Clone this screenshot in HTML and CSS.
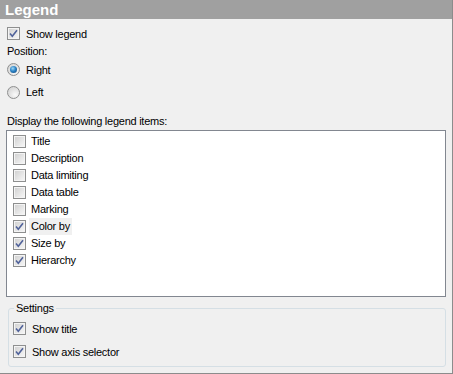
FILE: index.html
```html
<!DOCTYPE html>
<html lang="en">
<head>
  <meta charset="UTF-8">
  <title>Legend</title>
  <link rel="stylesheet" href="styles.css">
</head>
<body>
  <div class="panel">
    <div class="header">Legend</div>

    <div class="content">
      <label class="check-row">
        <span class="cb checked"><svg viewBox="0 0 13 13"><path d="M3 6.5 L5.3 9.2 L10 3.2" /></svg></span>
        <span>Show legend</span>
      </label>

      <div class="caption">Position:</div>

      <label class="radio-row first">
        <span class="rb selected"><span class="dot"></span></span>
        <span>Right</span>
      </label>
      <label class="radio-row">
        <span class="rb"></span>
        <span>Left</span>
      </label>

      <div class="caption items-caption">Display the following legend items:</div>

      <div class="list">
        <div class="list-item"><span class="cb"></span><span class="item-text">Title</span></div>
        <div class="list-item"><span class="cb"></span><span class="item-text">Description</span></div>
        <div class="list-item"><span class="cb"></span><span class="item-text">Data limiting</span></div>
        <div class="list-item"><span class="cb"></span><span class="item-text">Data table</span></div>
        <div class="list-item"><span class="cb"></span><span class="item-text">Marking</span></div>
        <div class="list-item"><span class="cb checked"><svg viewBox="0 0 13 13"><path d="M3 6.5 L5.3 9.2 L10 3.2" /></svg></span><span class="item-text focused">Color by</span></div>
        <div class="list-item"><span class="cb checked"><svg viewBox="0 0 13 13"><path d="M3 6.5 L5.3 9.2 L10 3.2" /></svg></span><span class="item-text">Size by</span></div>
        <div class="list-item"><span class="cb checked"><svg viewBox="0 0 13 13"><path d="M3 6.5 L5.3 9.2 L10 3.2" /></svg></span><span class="item-text">Hierarchy</span></div>
      </div>

      <fieldset class="group">
        <legend>Settings</legend>
        <label class="check-row group-row">
          <span class="cb checked"><svg viewBox="0 0 13 13"><path d="M3 6.5 L5.3 9.2 L10 3.2" /></svg></span>
          <span>Show title</span>
        </label>
        <label class="check-row group-row">
          <span class="cb checked"><svg viewBox="0 0 13 13"><path d="M3 6.5 L5.3 9.2 L10 3.2" /></svg></span>
          <span>Show axis selector</span>
        </label>
      </fieldset>
    </div>
  </div>
</body>
</html>
```

FILE: styles.css
```css
:root {
  --header-bg: #a0a0a0;
  --panel-bg: #f0f0f0;
  --edge: #8c8c8c;
  --list-border: #828790;
  --group-border: #d5dfe5;
  --check-color: #50629a;
}

* {
  box-sizing: border-box;
  margin: 0;
  padding: 0;
}

body {
  background-color: var(--panel-bg);
  font-family: 'Liberation Sans', Arial, sans-serif;
  font-size: 11px;
  letter-spacing: -0.25px;
  color: #000;
}

.panel {
  width: 453px;
  height: 374px;
  background-color: var(--panel-bg);
  border-right: 1px solid var(--edge);
  border-bottom: 1px solid var(--edge);
  overflow: hidden;
}

.header {
  height: 19px;
  line-height: 19px;
  padding-left: 5px;
  background-color: var(--header-bg);
  color: #fff;
  font-weight: bold;
  font-size: 15px;
  letter-spacing: 0;
}

.content {
  padding-left: 6px;
}

/* checkbox / radio rows */
.check-row,
.radio-row {
  display: flex;
  align-items: center;
  padding-left: 1px;
  gap: 6px;
}

.check-row {
  margin-top: 4px;
  height: 21px;
}

.caption {
  height: 14px;
  line-height: 14px;
  padding-left: 1px;
}

.radio-row {
  height: 22px;
}

.radio-row.first {
  height: 23px;
}

.items-caption {
  margin-top: 9px;
  height: 18px;
  line-height: 18px;
}

.cb {
  position: relative;
  flex: none;
  width: 13px;
  height: 13px;
  border: 1px solid #8e8f8f;
  background: linear-gradient(135deg, #cfcfcf 0%, #e8e8e8 60%, #f8f8f8 100%);
  box-shadow: inset 0 0 0 1px #f4f4f4;
}

.cb svg {
  position: absolute;
  left: -1px;
  top: -1px;
  width: 13px;
  height: 13px;
}

.cb svg path {
  fill: none;
  stroke: var(--check-color);
  stroke-width: 1.6;
}

.rb {
  position: relative;
  flex: none;
  width: 13px;
  height: 13px;
  border-radius: 50%;
  border: 1px solid #8e8f8f;
  background: radial-gradient(circle at 65% 70%, #fafafa 0%, #e0e0e0 55%, #d0d0d0 100%);
}

.rb .dot {
  position: absolute;
  left: 2px;
  top: 2px;
  width: 7px;
  height: 7px;
  border-radius: 50%;
  background: radial-gradient(circle at 40% 35%, #9fd8f6 0%, #2b83c6 45%, #0d3f73 100%);
}

/* legend items list */
.list {
  width: 440px;
  height: 167px;
  border: 1px solid var(--list-border);
  background-color: #fff;
  padding: 2px 0 0 6px;
}

.list-item {
  display: flex;
  align-items: center;
  height: 17px;
  gap: 3px;
}

.item-text {
  height: 17px;
  line-height: 17px;
  padding: 0 2px;
}

.item-text.focused {
  background-color: #f0f0f0;
}

/* settings group */
.group {
  margin: 4px 0 0 2px;
  width: 438px;
  height: 66px;
  border: 1px solid var(--group-border);
  border-radius: 3px;
  padding: 0 0 0 4px;
}

.group legend {
  margin-left: 1px;
  padding: 0 2px;
  line-height: 14px;
}

.group-row {
  margin-top: 2px;
  height: 23px;
  padding-left: 0;
}

.group-row + .group-row {
  margin-top: 0;
}
```
